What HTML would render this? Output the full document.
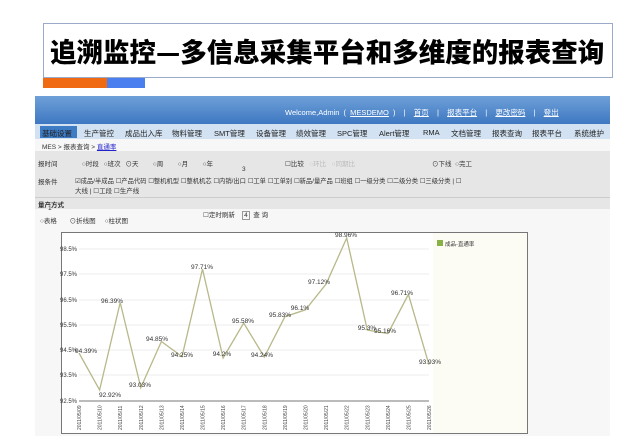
<!DOCTYPE html>
<html><head><meta charset="utf-8"><style>
body{margin:0;width:640px;height:443px;background:#fff;position:relative;overflow:hidden;font-family:"Liberation Sans","Noto Sans CJK SC",sans-serif}
.a{position:absolute}
.t{left:43px;top:23px;width:570px;height:55px;border:1px solid #9aaac8;box-sizing:border-box}
.t span{position:absolute;left:6px;top:11px;font-size:26.5px;line-height:32px;white-space:nowrap;font-weight:900;color:#000;font-family:"Noto Sans CJK SC",sans-serif}
.s{font-size:6.5px;color:#333;white-space:nowrap;font-family:"Liberation Sans","Noto Sans CJK SC",sans-serif}
.n{position:absolute;top:128px;font-size:7.5px;color:#222;white-space:nowrap}
</style></head><body>
<div class="a t"><span>追溯监控—多信息采集平台和多维度的报表查询</span></div>
<div class="a" style="left:43px;top:78px;width:64px;height:10px;background:#f06a14"></div>
<div class="a" style="left:107px;top:78px;width:38px;height:10px;background:#4a7ff0"></div>
<div class="a" style="left:35px;top:96px;width:575px;height:340px;background:#f7f7f7"></div>
<div class="a" style="left:35px;top:96px;width:575px;height:28px;background:linear-gradient(#6fa0d8,#3e78c2)"></div>
<div class="a s" style="left:285px;top:107px;color:#fff;font-size:7.5px;word-spacing:2px">Welcome,Admin ( <u>MESDEMO</u> ) &nbsp;| &nbsp;<u>首页</u> &nbsp;| &nbsp;<u>报表平台</u> &nbsp;| &nbsp;<u>更改密码</u> &nbsp;| &nbsp;<u>登出</u></div>
<div class="a" style="left:35px;top:124px;width:575px;height:15px;background:#d2e2f2"></div>
<div class="a" style="left:40px;top:126px;width:37px;height:12px;background:#3d7bc4"></div>
<div class="n" style="left:42px">基础设置</div><div class="n" style="left:84px">生产管控</div><div class="n" style="left:125px">成品出入库</div><div class="n" style="left:172px">物料管理</div><div class="n" style="left:214px">SMT管理</div><div class="n" style="left:256px">设备管理</div><div class="n" style="left:296px">绩效管理</div><div class="n" style="left:337px">SPC管理</div><div class="n" style="left:379px">Alert管理</div><div class="n" style="left:423px">RMA</div><div class="n" style="left:451px">文档管理</div><div class="n" style="left:492px">报表查询</div><div class="n" style="left:532px">报表平台</div><div class="n" style="left:574px">系统维护</div>
<div class="a s" style="left:42px;top:141px">MES &gt; 报表查询 &gt; <u style="color:#22c">直通率</u></div>
<div class="a" style="left:35px;top:151px;width:575px;height:58px;background:#e6e6e6"></div>
<div class="a s" style="left:38px;top:158px">报时间</div>
<div class="a s" style="left:82px;top:158px;word-spacing:3px">○时段 ○班次 ⊙天 &nbsp; ○周 &nbsp; ○月 &nbsp; ○年</div>
<div class="a s" style="left:285px;top:158px">☐比较 &nbsp; <span style="color:#bbb">○环比 &nbsp; ○同期比</span></div>
<div class="a s" style="left:432px;top:158px">⊙下线 &nbsp;○完工</div>
<div class="a s" style="left:242px;top:166px">3</div>
<div class="a s" style="left:38px;top:176px">报条件</div>
<div class="a s" style="left:75px;top:176px;font-size:6.3px">☑成品/半成品 ☐产品代码 ☐整机机型 ☐整机机芯 ☐内销/出口 ☐工单 ☐工单别 ☐新品/量产品 ☐班组 ☐一级分类 ☐二级分类 ☐三级分类 | ☐</div>
<div class="a s" style="left:75px;top:185px">大线 | ☐工段 ☐生产线</div>
<div class="a" style="left:35px;top:197px;width:575px;height:1px;background:#ccc"></div>
<div class="a s" style="left:38px;top:199px;font-weight:bold">量产方式</div>
<div class="a s" style="left:48px;top:205px">1</div>
<div class="a s" style="left:40px;top:215px">○表格 &nbsp; &nbsp; &nbsp; ⊙折线图 &nbsp; &nbsp; ○柱状图</div>
<div class="a s" style="left:203px;top:209px">☐定时刷新 &nbsp; &nbsp;<span style="border:1px solid #999;padding:0 1px">4</span> &nbsp;查 询</div>
<svg class="a" style="left:0;top:0" width="640" height="443">
<rect x="61.5" y="232.5" width="466" height="201" fill="#fff" stroke="#777"/>
<rect x="433" y="233" width="94" height="200" fill="#fdfcf4"/>
<g stroke="#eee" stroke-width="1">
<line x1="79" y1="249" x2="429" y2="249"/><line x1="79" y1="274" x2="429" y2="274"/><line x1="79" y1="300" x2="429" y2="300"/><line x1="79" y1="325" x2="429" y2="325"/><line x1="79" y1="350" x2="429" y2="350"/><line x1="79" y1="375" x2="429" y2="375"/>
</g>
<line x1="79" y1="401" x2="429" y2="401" stroke="#777"/>
<g font-size="6" fill="#333" font-family="Liberation Sans" text-anchor="end">
<text x="77" y="251">98.5%</text><text x="77" y="276">97.5%</text><text x="77" y="302">96.5%</text><text x="77" y="327">95.5%</text><text x="77" y="352">94.5%</text><text x="77" y="377">93.5%</text><text x="77" y="403">92.5%</text>
</g>
<polyline fill="none" stroke="#b8b88a" stroke-width="1.3" points="79,353 99.6,390 120.2,302.5 140.8,387.6 161.4,341.5 182,356.7 202.5,269 223.1,358 243.7,323 264.3,357 284.9,316.7 305.5,309.8 326.1,284 346.7,238 367.3,330 387.9,333.6 408.4,294.4 429,364.8"/>
<g font-size="6.5" fill="#333" font-family="Liberation Sans" text-anchor="middle">
<text x="86" y="353">94.39%</text><text x="110" y="397">92.92%</text><text x="112" y="303">96.39%</text><text x="140" y="387">93.03%</text><text x="157" y="341">94.85%</text><text x="182" y="357">94.25%</text><text x="202" y="269">97.71%</text><text x="222" y="356">94.2%</text><text x="243" y="323">95.58%</text><text x="262" y="357">94.24%</text><text x="280" y="317">95.83%</text><text x="300" y="310">96.1%</text><text x="319" y="284">97.12%</text><text x="346" y="237">98.96%</text><text x="367" y="330">95.3%</text><text x="385" y="333">95.16%</text><text x="402" y="295">96.71%</text><text x="430" y="364">93.93%</text>
</g>
<g font-size="5" fill="#444" font-family="Liberation Sans">
<text transform="translate(81,430) rotate(-90)">2011/05/09</text><text transform="translate(101.6,430) rotate(-90)">2011/05/10</text><text transform="translate(122.2,430) rotate(-90)">2011/05/11</text><text transform="translate(142.8,430) rotate(-90)">2011/05/12</text><text transform="translate(163.4,430) rotate(-90)">2011/05/13</text><text transform="translate(184,430) rotate(-90)">2011/05/14</text><text transform="translate(204.5,430) rotate(-90)">2011/05/15</text><text transform="translate(225.1,430) rotate(-90)">2011/05/16</text><text transform="translate(245.7,430) rotate(-90)">2011/05/17</text><text transform="translate(266.3,430) rotate(-90)">2011/05/18</text><text transform="translate(286.9,430) rotate(-90)">2011/05/19</text><text transform="translate(307.5,430) rotate(-90)">2011/05/20</text><text transform="translate(328.1,430) rotate(-90)">2011/05/21</text><text transform="translate(348.7,430) rotate(-90)">2011/05/22</text><text transform="translate(369.3,430) rotate(-90)">2011/05/23</text><text transform="translate(389.9,430) rotate(-90)">2011/05/24</text><text transform="translate(410.4,430) rotate(-90)">2011/05/25</text><text transform="translate(431,430) rotate(-90)">2011/05/26</text>
</g>
<rect x="437" y="240" width="6" height="6" fill="#8ab048"/>
<text x="445" y="246" font-size="5.5" fill="#333" font-family="Noto Sans CJK SC">成品-直通率</text>
</svg>
</body></html>
